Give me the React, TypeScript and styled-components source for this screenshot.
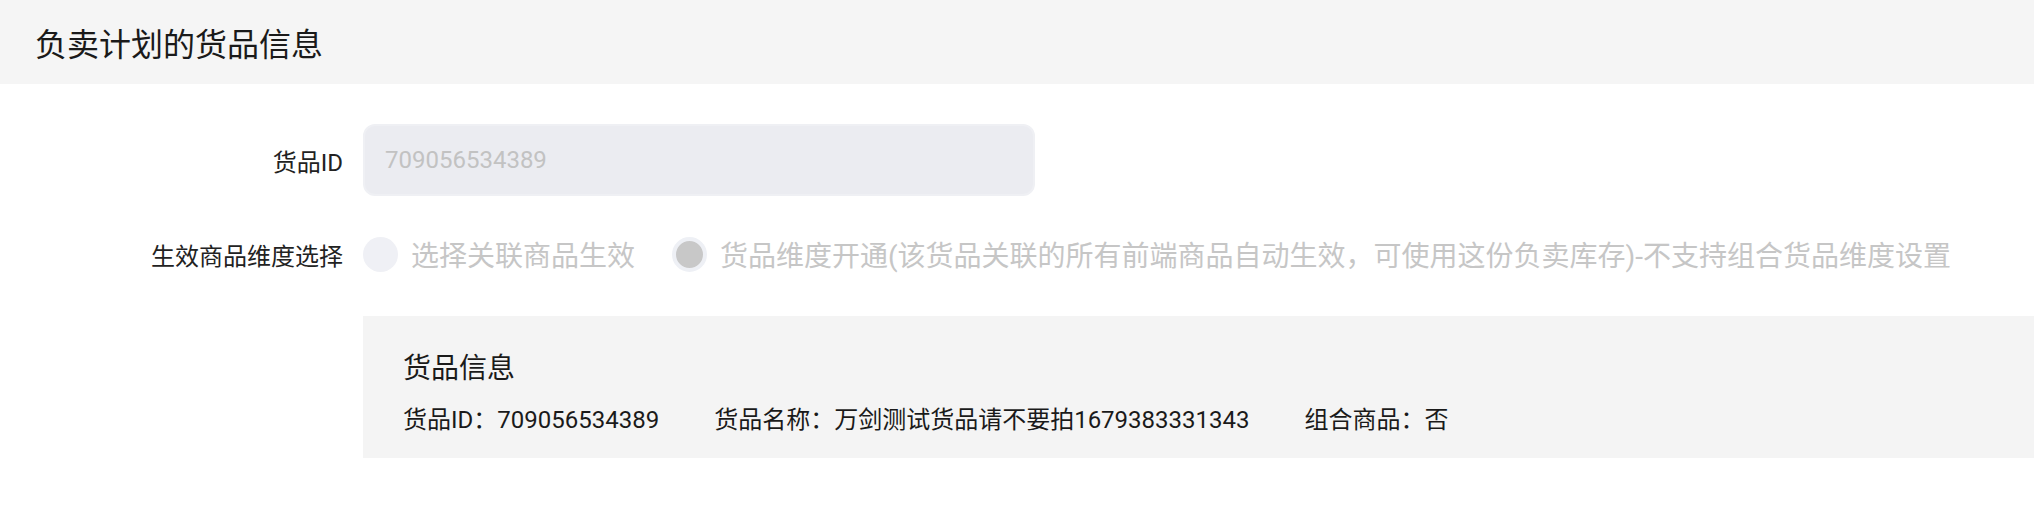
import React from "react";
import styled, { createGlobalStyle } from "styled-components";

const GlobalStyle = createGlobalStyle`
  html, body {
    margin: 0;
    padding: 0;
    background: #ffffff;
  }
  body {
    font-family: Roboto, "Noto Sans CJK SC", "Noto Sans", sans-serif;
    color: #1f1f1f;
  }
`;

const Page = styled.div`
  width: 2034px;
  min-height: 516px;
  background: #ffffff;
  overflow: hidden;
`;

const SectionHeader = styled.div`
  height: 84px;
  display: flex;
  align-items: center;
  padding-left: 35px;
  background: #f5f5f5;
  font-size: 32px;
  color: #1a1a1a;
`;

const Form = styled.div`
  display: flex;
  flex-direction: column;
  padding-top: 40px;
`;

const Row = styled.div<{ $gap?: number }>`
  display: grid;
  grid-template-columns: 363px 1fr;
  align-items: center;
  min-height: 72px;
  margin-top: ${(p) => p.$gap ?? 0}px;
`;

const Label = styled.div`
  text-align: right;
  padding-right: 20px;
  font-size: 24px;
  color: #222222;
`;

const Input = styled.input`
  box-sizing: border-box;
  width: 672px;
  height: 72px;
  padding: 0 20px;
  border: 2px solid #eff0f4;
  border-radius: 12px;
  background: #ebecf1;
  font-family: inherit;
  font-size: 24px;
  color: #c2c2c2;
  outline: none;

  &:disabled {
    color: #c2c2c2;
    -webkit-text-fill-color: #c2c2c2;
  }
`;

const RadioGroup = styled.div`
  display: flex;
  align-items: center;
  gap: 20px;
`;

const Option = styled.label`
  display: flex;
  align-items: center;
  gap: 13px;
  font-size: 28px;
  color: #c6c6c6;
  white-space: nowrap;
  margin-right: 17px;
`;

const RadioDot = styled.span<{ $checked?: boolean }>`
  box-sizing: border-box;
  width: 35px;
  height: 35px;
  border-radius: 50%;
  background: ${(p) => (p.$checked ? "#c8c8c8" : "#eff0f5")};
  border: ${(p) => (p.$checked ? "4px solid #eef0f5" : "none")};
  flex-shrink: 0;
`;

const InfoBox = styled.div`
  grid-column: 2;
  box-sizing: border-box;
  height: 142px;
  padding: 33px 40px 0;
  background: #f4f4f4;
`;

const InfoTitle = styled.div`
  font-size: 28px;
  line-height: 40px;
  color: #1a1a1a;
`;

const InfoLine = styled.div`
  display: flex;
  gap: 55px;
  margin-top: 13px;
  font-size: 24px;
  line-height: 36px;
  color: #1a1a1a;
`;

const goods = {
  id: "709056534389",
  name: "万剑测试货品请不要拍1679383331343",
  combo: "否",
};

export default function App() {
  return (
    <Page>
      <GlobalStyle />
      <SectionHeader>负卖计划的货品信息</SectionHeader>
      <Form>
        <Row>
          <Label>货品ID</Label>
          <div>
            <Input disabled value={goods.id} readOnly />
          </div>
        </Row>
        <Row $gap={22}>
          <Label>生效商品维度选择</Label>
          <RadioGroup>
            <Option>
              <RadioDot />
              选择关联商品生效
            </Option>
            <Option>
              <RadioDot $checked />
              货品维度开通(该货品关联的所有前端商品自动生效，可使用这份负卖库存)-不支持组合货品维度设置
            </Option>
          </RadioGroup>
        </Row>
        <Row $gap={26}>
          <InfoBox>
            <InfoTitle>货品信息</InfoTitle>
            <InfoLine>
              <span>货品ID：{goods.id}</span>
              <span>货品名称：{goods.name}</span>
              <span>组合商品：{goods.combo}</span>
            </InfoLine>
          </InfoBox>
        </Row>
      </Form>
    </Page>
  );
}
